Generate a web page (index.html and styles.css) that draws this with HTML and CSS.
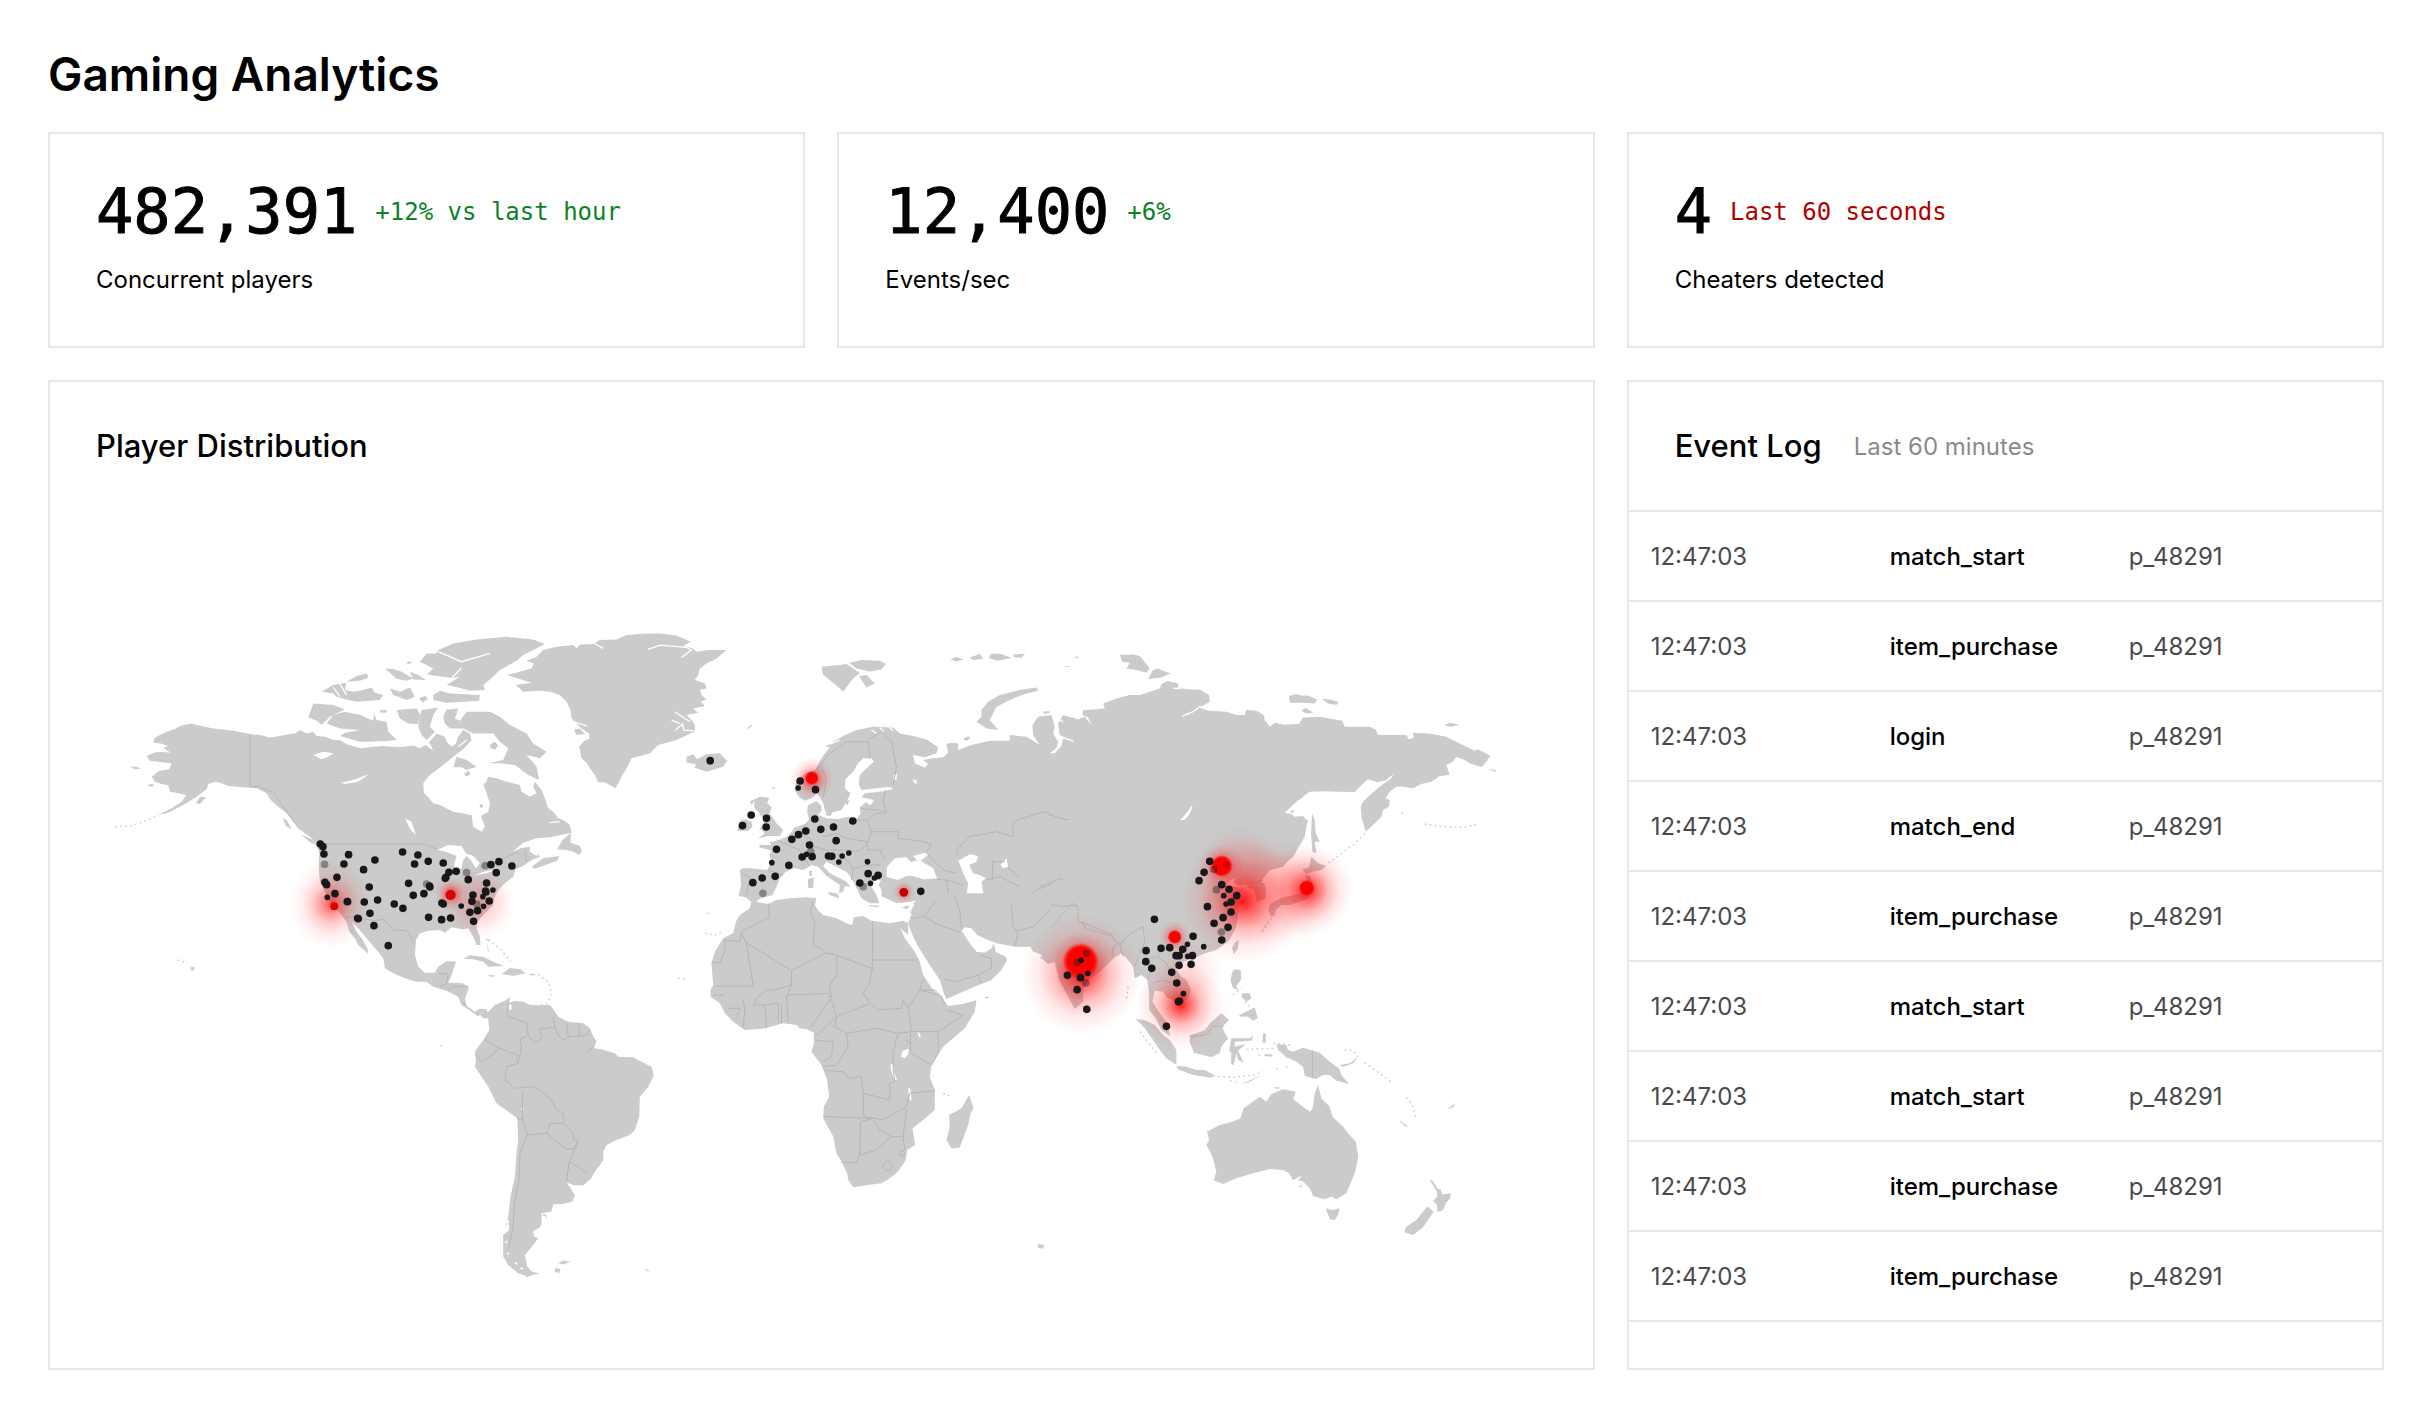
FILE: index.html
```html
<!DOCTYPE html>
<html lang="en">
<head>
<meta charset="utf-8">
<meta name="viewport" content="width=device-width, initial-scale=1">
<title>Gaming Analytics</title>
<link rel="stylesheet" href="styles.css">
</head>
<body>
<main class="page">
  <h1 class="page-title">Gaming Analytics</h1>
  <div class="dashboard">
    <section class="card stat">
      <div class="stat-row"><span class="stat-value">482,391</span><span class="stat-note up">+12% vs last hour</span></div>
      <p class="stat-label">Concurrent players</p>
    </section>
    <section class="card stat">
      <div class="stat-row"><span class="stat-value">12,400</span><span class="stat-note up">+6%</span></div>
      <p class="stat-label">Events/sec</p>
    </section>
    <section class="card stat">
      <div class="stat-row"><span class="stat-value">4</span><span class="stat-note alert">Last 60 seconds</span></div>
      <p class="stat-label">Cheaters detected</p>
    </section>

    <section class="card distribution">
      <header class="card-header"><h2 class="card-title">Player Distribution</h2></header>
      <svg class="map" viewBox="50 510 1543 858" role="img" aria-label="World map of players">
        <defs>
          <radialGradient id="glow"><stop offset="0" stop-color="#f00" stop-opacity=".9"/><stop offset=".2" stop-color="#f00" stop-opacity=".58"/><stop offset=".45" stop-color="#f00" stop-opacity=".26"/><stop offset=".7" stop-color="#f00" stop-opacity=".09"/><stop offset="1" stop-color="#f00" stop-opacity="0"/></radialGradient>
          <radialGradient id="haze"><stop offset="0" stop-color="#f00" stop-opacity=".24"/><stop offset=".5" stop-color="#f00" stop-opacity=".12"/><stop offset=".8" stop-color="#f00" stop-opacity=".03"/><stop offset="1" stop-color="#f00" stop-opacity="0"/></radialGradient>
          <radialGradient id="core"><stop offset=".75" stop-color="#f00"/><stop offset="1" stop-color="#f00" stop-opacity="0"/></radialGradient>
        </defs>

        <!-- North America -->
        <g transform="translate(100 600) scale(.33333)">
          <path class="land" d="M275 370L258 374 240 378 222 388 200 395 165 412 160 428 182 430 205 438 190 444 212 458 190 456 165 457 140 468 150 482 180 486 215 490 208 508 178 512 155 530 165 545 185 552 205 556 210 575 235 580 258 585 245 605 215 625 175 645 205 638 250 615 290 590 320 568 325 552 345 545 365 550 385 558 430 562 470 565 500 580 512 600 535 620 560 640 580 665 605 692 635 715 650 735 658 760 656 800 660 845 675 875 690 905 720 940 740 965 748 995 765 1015 775 1035 805 1062 803 1045 785 1015 770 995 755 965 775 985 800 1015 830 1050 850 1075 855 1105 880 1120 915 1135 950 1145 980 1145 1000 1160 1040 1172 1075 1190 1085 1215 1115 1235 1135 1250 1145 1238 1165 1245 1160 1228 1140 1226 1125 1235 1100 1218 1095 1195 1107 1165 1090 1150 1045 1148 1055 1125 1068 1085 1040 1083 1015 1100 1005 1118 975 1118 955 1100 945 1065 948 1020 960 1000 985 992 1020 990 1035 998 1055 982 1090 988 1105 985 1120 1010 1130 1035 1142 1035 1140 1010 1130 985 1132 965 1155 940 1180 915 1183 895 1195 870 1215 850 1240 830 1247 808 1270 798 1295 780 1320 770 1300 745 1350 712 1415 698 1410 675 1390 660 1375 655 1360 635 1345 625 1335 595 1325 570 1305 545 1300 560 1310 580 1290 590 1265 575 1260 555 1220 545 1190 535 1165 530 1158 548 1150 552 1160 580 1170 610 1165 635 1143 648 1155 680 1145 695 1120 680 1115 645 1060 635 1020 615 1000 610 985 592 972 580 970 550 990 525 1030 495 1060 470 1090 448 1115 420 1110 400 1090 390 1075 410 1068 430 1055 440 1040 425 1035 410 1010 400 985 430 960 445 940 436 900 442 845 438 780 445 740 432 720 420 700 420 675 410 650 408 640 395 620 400 600 390 585 400 570 402 540 408 510 412 480 405 450 402 400 392 340 385 290 375Z"/>
          <path class="land" d="M640 310L700 315 735 328 710 340 690 350 665 375 650 362 625 352ZM735 335L780 345 820 362 822 340 830 360 860 365 865 395 890 420 840 425 780 425 720 408 735 398 780 390 720 385 680 370 700 345ZM960 185L980 160 1010 160 1015 150 1060 130 1130 118 1220 110 1300 118 1335 132 1300 150 1270 165 1250 182 1200 210 1180 230 1150 255 1155 270 1110 272 1075 262 1040 255 1080 230 1050 235 980 225 1000 205ZM1000 285L1020 272 1050 280 1140 285 1138 302 1090 305 1040 308 1000 300ZM665 275L700 255 740 248 735 270 760 275 790 270 815 262 825 278 850 285 840 300 770 305 740 298 710 290 700 280ZM870 265L900 275 930 262 945 290 920 300 895 290 880 285ZM740 245L770 228 800 220 806 232 780 242ZM855 205L880 207 905 215 940 235 920 242 890 236 870 218ZM930 215L955 225 978 240 940 238ZM1030 350L1040 328 1075 325 1065 355 1080 362 1100 335 1170 335 1200 350 1230 375 1280 400 1300 430 1340 455 1320 475 1280 465 1310 500 1318 540 1285 525 1245 495 1200 490 1165 490 1210 480 1225 445 1200 425 1180 400 1120 400 1090 385 1050 385 1035 370ZM890 330L950 325 962 345 955 372 925 370 900 355ZM965 330L1015 322 1000 345 990 380 1005 395 980 420 965 405 955 380ZM1060 502L1070 470 1100 480 1130 500 1100 510 1085 502ZM1092 522L1105 512 1112 522 1100 530ZM1138 618l5-7 8 6-6 8ZM1170 435l15-10 10 12-10 12-12-4ZM1295 800L1330 775 1378 768 1372 782 1345 792 1305 806ZM1372 748L1388 720 1413 698 1412 728 1440 738 1446 752 1438 765 1420 755 1400 750ZM603 703L635 718 652 737 630 727ZM548 655L560 660 575 688 558 678ZM288 610L300 590 318 592 300 612ZM90 500l20 0 12 6-18 2ZM142 555l14-4 8 6-14 3ZM272 1100l12 2-2 10-10-2ZM1090 1077L1110 1066 1150 1070 1180 1085 1212 1098 1165 1100 1150 1085 1120 1078ZM1205 1122L1230 1104 1262 1108 1276 1120 1240 1128ZM1165 1124l20 2-5 5-12-2ZM1290 1121l16 0-2 5-14 0ZM1160 1030l8 25-4-2ZM1155 1015l15 4-6 3ZM918 188l12-4 8 4-14 4ZM958 295l18-8 8 10-16 10ZM840 330l22 0-4 8-16 0Z"/>
          <path class="water" d="M1012 750L1045 735 1085 738 1098 760 1120 768 1140 790 1128 805 1112 780 1100 768 1090 780 1085 805 1070 812 1062 795 1070 768 1040 756ZM1122 828L1150 815 1190 808 1160 820ZM1238 755L1270 728 1310 715 1350 712 1330 735 1310 768 1290 755 1290 740 1262 745ZM640 465L670 455 700 460 685 470 665 478ZM722 548L760 540 808 522 775 545 735 552ZM915 655L935 665 948 705 932 690ZM1000 452L965 425 990 430Z"/>
          <path class="line" d="M655 732H972L1012 748M1140 800L1200 782 1245 758 1258 760M1275 748L1280 785M450 402V560L478 560 520 578 600 690M735 952L760 950 820 962 850 958 880 990 920 992 945 1030M1015 1120L1045 1122 1040 1150 1020 1160M1042 1170L1060 1160 1105 1160M1088 1210L1100 1214"/>
          <path class="inlet" d="M1015 155L1085 185 1170 160M1050 240L1085 203M980 225L1050 235M650 280L700 290M745 432L850 425M1100 420L1075 440M1380 665L1350 668M700 262L720 290M720 252L740 285"/>
          <path class="isles" d="M45 680L90 678 130 665 175 645M232 1080L262 1090M1165 1020L1200 1045 1232 1085M1315 1123L1345 1145 1355 1180 1340 1212 1320 1215M515 575L575 640"/>
        </g>

        <!-- Greenland and Iceland -->
        <g transform="translate(460 600) scale(.33333)">
          <path class="land" d="M140 225L180 215 215 205 222 190 200 182 230 170 250 150 290 140 340 135 350 145 360 133 400 132 420 120 470 118 500 105 560 100 600 100 650 106 692 125 670 138 700 145 710 155 745 150 800 150 770 175 740 190 720 205 715 225 705 240 735 250 740 265 720 270 725 285 740 298 722 305 735 318 700 325 715 338 680 345 700 365 705 375 703 395 650 420 595 435 570 460 515 475 500 505 485 530 467 565 437 548 415 546 405 525 390 505 380 488 365 475 358 440 370 425 388 415 388 400 365 385 335 355 332 330 320 305 300 285 270 275 240 272 190 275 168 255 215 248ZM342 388L360 385 375 402 350 405ZM680 470L700 463 712 478 740 463 780 460 802 482 790 500 740 515 705 503 708 492 680 488ZM860 385l14-10 4 2-12 8Z"/>
          <path class="inlet" d="M565 148L600 135 680 142 695 150 665 172M400 128L430 145M645 335L690 365M645 392L668 372 672 390 700 392M635 360L660 370M340 365L382 378"/>
        </g>

        <!-- Europe and western Asia -->
        <g transform="translate(680 620) scale(.33333)">
          <path class="land" d="M176 828L184 795 180 750 190 744 215 745 262 750 275 725 268 705 275 692 238 682 240 674 275 676 270 665 290 664 310 655 325 648 345 622 375 612 388 598 382 575 385 555 410 543 425 558 425 572 415 585 440 595 475 597 505 590 532 595 542 580 540 562 560 545 575 552 582 540 545 532 555 520 600 515 640 508 630 500 590 505 545 510 537 495 540 465 555 450 582 425 575 415 550 415 535 430 520 455 497 478 495 505 512 520 500 545 485 570 455 578 437 575 430 550 420 530 412 520 395 535 375 542 358 532 345 510 350 480 375 462 405 450 425 415 450 380 435 382 465 362 490 348 530 330 580 320 640 322 660 340 700 348 740 358 775 382 770 400 735 412 700 405 705 430 735 443 745 432 730 420 760 415 790 412 805 398 800 370 830 368 835 390 875 375 930 362 990 362 990 345 1040 350 1080 375 1060 345 1058 315 1075 290 1115 285 1125 320 1120 340 1135 365 1130 385 1110 400 1125 400 1145 378 1150 355 1180 365 1140 345 1135 310 1150 285 1200 300V880H690L705 850 715 840 690 845 650 850 625 838 605 828 605 810 597 795 603 780 585 780 565 785 575 800 590 825 598 850 570 850 545 835 530 805 518 780 500 755 465 738 440 725 430 738 450 760 500 785 512 800 495 798 490 815 478 820 480 795 440 768 415 740 395 735 370 750 345 745 318 755 300 775 290 800 278 825 240 836 220 852 198 832ZM445 815L475 822 478 835 450 825ZM384 778L402 772 400 805 385 803ZM388 752l8 0 0 16-6 0ZM225 538L240 530 268 533 262 550 275 560 270 580 290 610 310 630 300 648 265 648 235 655 255 640 238 625 252 612 248 595 235 575 222 562ZM172 632L178 605 195 598 215 605 218 620 205 632ZM440 572l18 5-6 12-14-4ZM500 540l10 2-8 14-4-4ZM566 855l34 2-4 5-28-3ZM665 862l26-6-10 12ZM425 140L480 135 500 132 540 158 520 175 490 215 465 192 430 165ZM508 128L545 120 600 122 618 132 605 148 570 154 530 145ZM538 168L560 165 585 190 560 202ZM890 305L905 290 905 270 925 245 960 225 1020 210 1070 202 1075 212 1040 220 1000 235 950 260 930 300 955 330 920 325ZM852 355l12-6 8 4-10 8-10-2ZM812 118l18-8 20 8-20 6ZM870 112l30-10 10 14-30 4ZM935 100l30 2 30 12-40 8-28-8ZM1000 104l36-4-10 12-22 0ZM1090 275l18-2 2 6-18 2ZM210 545l18-10-12 20ZM275 510l8-12 2 6ZM805 370l30 0 0 15-30 10Z"/>
          <path class="water" d="M620 770L622 740 645 715 680 712 693 725 712 722 700 708 735 698 745 705 722 722 760 745 772 775 730 778 700 768 680 768 655 780ZM836 722L870 703 895 708 890 725 868 735 880 760 900 765 918 775 905 785 912 830 880 835 860 825 865 790 850 760ZM640 465L652 462 650 480 642 478ZM697 478L712 482 708 495ZM962 735L980 715 985 740 970 745ZM568 540L578 545 572 555 560 550Z"/>
          <path class="line" d="M410 450L450 400 500 365 565 365 570 415M565 360L605 335 635 365 650 440 640 495M430 535L440 480 425 440M542 565L590 570 620 575 610 545 618 510M560 600L590 580 620 580M520 600L560 600 575 635 565 665M575 635L655 635 655 655 735 665 755 675 740 695M430 650L470 640 500 655 565 665 545 690 520 695M380 610L360 640 390 655 400 680 440 690 520 690M290 660L360 690 370 710 390 740M470 700L500 720 520 745 560 735 600 735M600 690L615 720M185 760L210 770 200 825M265 750L310 765M520 745L515 780M745 705L790 750 830 760M770 778L800 780 805 825 770 835 700 850M800 780L850 795M830 690L870 650 950 635 1000 650 1000 605 1090 575 1140 595 1170 600 1200 625M830 690L835 710M938 780V725L975 725M985 745L1020 770 1080 790 1100 760 1150 770 1200 770M920 780L960 770 1020 800 1065 825M805 825L830 880M1000 860L1065 825 1100 835 1140 830 1160 850 1200 840M560 665L565 690 610 690"/>
          <path class="inlet" d="M575 330L590 340M600 322L612 335M628 322L640 332M450 372L480 360M1130 295L1150 305M1140 350L1180 362 1185 380"/>
        </g>

        <!-- Siberia and central Asia -->
        <g transform="translate(960 620) scale(.33333)">
          <path class="land" d="M340 290L350 300 375 290 395 315 385 292 368 285 370 270 400 268 435 265 430 250 470 235 510 225 540 225 570 215 600 205 605 192 625 183 655 190 655 203 690 208 720 208 748 225 750 245 720 262 745 272 800 275 830 285 858 285 860 270 900 278 912 300 930 320 945 308 970 315V740L925 745 905 765 905 785 918 800 918 830 890 840 885 805 870 790 840 795 822 785 835 770 805 785 800 800 825 800 850 810 830 825 840 850 832 880 815 905H340ZM480 105L520 103 540 108 550 120 570 145 560 158 530 150 500 145 510 128 488 125ZM565 177L580 150 595 145 610 152 633 160 605 172ZM315 138h14v2h-14ZM345 110h12v3h-12Z"/>
          <path class="water" d="M636 618Q665 600 680 580T698 553Q698 570 685 588T636 618Z"/>
          <path class="inlet" d="M668 288L700 275 720 260 755 268M640 205L665 205"/>
          <path class="line" d="M360 630L400 640 440 660 395 690 385 710 375 740 330 735M440 660L500 635 550 640 560 620 610 625 640 640 710 650 790 640 800 610 850 600 880 620 910 660 960 670M440 660L480 685 485 705 560 740 640 755 710 740 730 710 800 685 755 660 760 645M260 770L300 760M230 800L300 800 310 825 360 850 355 900M290 715L335 700"/>
        </g>

        <!-- Russian far east, Korea and Japan -->
        <g transform="translate(1240 620) scale(.33333)">
          <path class="land" d="M-10 290L15 285 20 270 50 272 72 285 75 300 90 320 100 318 105 308 130 314 178 312 190 292 240 290 308 302 315 320 390 320 408 328 415 345 500 345 508 358 522 352 520 338 570 340 620 350 660 370 705 392 715 388 752 407 740 425 725 442 690 430 670 418 650 410 640 425 620 435 630 465 600 468 575 485 545 492 520 505 490 500 470 500 450 515 438 535 450 540 448 560 430 570 425 590 410 605 378 635 365 590 363 560 370 545 385 530 420 500 455 475 460 463 440 480 415 487 385 478 360 500 345 516 300 515 260 514 210 515 170 545 135 578 155 582 165 590 190 588 203 605 195 650 160 710 125 740 98 742 62 785 78 810 75 838 52 845 45 810 22 800 18 775-10 770ZM217 580L225 600 228 640 240 665 225 665 230 700 218 695 214 640ZM188 748L208 742 215 710 235 730 260 738 245 750 220 755 200 762ZM195 765L212 768 220 800 205 835 180 845 150 855 125 855 108 870 105 885 95 890 85 870 90 852 130 832 165 825 190 815 205 790ZM148 228L170 222 185 226 205 226 232 238 225 250 185 248 150 248ZM246 236L270 238 297 246 290 255 265 250ZM185 272L198 264 222 278 200 280ZM613 316L630 308 660 314 635 320ZM745 448L770 450 765 455ZM150 572l14-2-6 10Z"/>
          <path class="line" d="M0 605L20 605 50 655 90 675 125 668 120 705 98 710 95 740M40 800L75 790"/>
          <path class="isles" d="M375 640L340 675 265 730M485 578L495 582M555 612L610 620 670 622 712 613M95 895L60 945"/>
        </g>

        <!-- India, China, south-east Asia and Oceania -->
        <g transform="translate(1020 820) scale(.33333)">
          <path class="land" d="M0 0H865L850 50 820 100 790 140 750 150 722 172 722 185 738 210 735 238 712 245 705 215 690 192 652 195 640 185 652 170 625 185 612 200 650 200 665 215 640 225 650 248 655 290 648 325 625 365 590 390 550 402 530 412 505 420 480 430 470 448 485 470 500 480 514 510 505 535 478 558 465 545 440 530 430 515 405 512 398 545 420 580 440 605 452 648 425 630 408 595 388 570 388 520 383 480 365 465 345 475 340 440 318 412 305 400 285 412 265 432 235 460 205 480 192 505 190 545 165 567 145 530 118 480 105 425 85 432 60 412 75 405 40 395 30 378 0 380ZM190 558l14-2 8 14-10 10-12-6ZM637 385L645 368 657 360 655 385 643 402ZM348 597L375 600 405 615 430 645 450 660 470 690 470 735 440 715 420 690 400 660 375 625ZM470 738L500 740 530 750 555 750 582 765 575 773 520 765 475 748ZM510 645L530 640 555 630 575 605 605 580 628 600 608 620 615 640 625 655 605 680 600 700 575 712 550 705 522 698 510 665ZM635 655L690 655 702 645 695 662 645 665 645 680 678 672 655 692 672 728 655 720 650 700 642 735 634 733 635 700 628 690ZM638 455L645 448 663 450 665 478 650 498 655 510 640 505 632 480ZM658 585L680 575 705 562 714 595 700 602 685 590 662 590ZM668 520L690 520 695 535 680 545 665 530ZM770 672L800 675 805 690 820 695 850 683 900 698 930 725 958 745 965 765 988 792 950 782 930 765 910 765 890 777 855 768 850 740 825 722 800 712 775 690ZM958 735L990 730 1015 710 1000 730 970 740ZM730 640l8 0 0 28-10 0ZM735 702l25 2-5 6-20-2ZM665 793L725 765 690 785ZM608 588L640 535 612 580ZM562 935L600 915 640 905 662 895 672 865 720 830 740 845 755 822 790 808 828 815 820 838 850 860 872 875 880 860 885 820 895 795 905 835 930 860 938 890 970 920 985 940 1008 965 1016 1010 1005 1060 980 1120 950 1138 935 1130 915 1138 880 1128 870 1105 850 1085 835 1080 850 1065 820 1080 808 1060 790 1050 750 1047 700 1060 650 1075 610 1092 582 1082 590 1055 578 1010 560 975 568 960ZM918 1165L938 1170 960 1165 955 1185 945 1200 930 1198ZM757 803l22-2-2 6ZM835 1100l14-4-4 6ZM1282 868L1310 848 1300 862ZM1135 897L1168 922 1155 918Z"/>
          <path class="line" d="M40 380L75 350 95 320 130 280 160 250 175 260 175 300 200 325 280 350 290 370 275 400M175 260L155 255 130 260 75 250 60 290 0 330M0 240L50 210 100 190M200 325L185 305 240 330 280 345M310 410L300 375 320 350 350 330 370 320 375 370 360 395 385 415M385 415L395 440 385 480M385 415L415 410 425 385 460 390M415 410L440 430 455 460 480 480M400 490L430 480 460 490M280 410V380L315 360M512 650L560 645 580 620 612 618M878 692V775M60 200L110 180 130 175M690 190L730 180M360 395L345 440"/>
          <path class="isles" d="M580 768L640 772 700 766 730 755M360 635L385 665 410 700M680 688L770 685M1035 728L1065 750 1118 788M1160 832L1180 860 1188 890M640 525L665 505M675 545L695 565M325 500L320 540M760 670L820 675M975 690L1000 692 1015 710M772 750L775 735M800 745L805 735M715 705L725 708M630 782L650 786M728 332L745 305"/>
        </g>
        <g transform="translate(1380 1120) scale(.33333)">
          <path class="land" d="M150 180L158 182 175 208 182 208 188 224 213 220 212 235 198 250 190 270 173 277 172 255 160 243 172 230 172 215ZM143 260L162 275 145 300 130 322 100 345 75 338 78 322 110 300Z"/>
        </g>

        <!-- Africa and Arabia -->
        <g transform="translate(690 880) scale(.33333)">
          <path class="land" d="M185 62L235 72 260 60 300 55 350 52 380 55 375 75 384 90 400 105 440 115 470 130 487 135 492 112 520 108 545 122 600 130 640 122 655 130 655 165 632 145 645 175 675 215 690 245 700 285 730 330 755 350 775 378 820 372 860 360 855 395 825 445 760 500 725 555 720 590 735 630 735 690 700 720 668 745 676 795 652 810 648 840 625 875 600 895 575 910 535 915 490 922 475 900 472 880 455 845 440 820 430 770 400 715 402 680 418 650 412 600 395 555 365 515 372 490 372 458 350 448 330 445 320 435 280 430 225 445 165 450 130 425 105 400 90 370 62 350 62 330 70 315 65 250 75 215 100 175 130 160 138 125 150 105 180 85ZM655 130L675 75 680 40H1085V248L1068 245 1055 225 1045 220 1030 200 975 200 920 190 890 178 862 165 845 145 825 142 816 152 840 190 860 215 885 218 905 205 912 190 918 215 948 230 952 240 935 270 905 300 850 322 770 357 762 340 750 300 710 240 695 215 685 200 668 165ZM838 645L851 685 843 700 835 735 810 803 785 806 770 780 780 740 778 705 815 685ZM885 350l14 0-4 5-10-1Z"/>
          <path class="water" d="M638 512L658 506 655 522 645 535 634 530ZM603 550L610 555 612 575 622 600 614 598 603 570ZM655 622L662 628 666 662 658 658ZM683 455L690 460 693 475 688 472Z"/>
          <path class="line" d="M237 70L238 112 155 155 150 185 105 180 105 215 90 248 65 248M155 160L170 190 190 318H118L78 318M165 185L305 272 410 218 440 225M370 65L362 95 375 130 370 190 410 220M410 218L440 225 545 265M548 125V265L540 305 520 340M550 240H685M305 272V315L255 330 230 330 200 355 190 380M305 315L290 350 300 345 420 340M440 225L442 280 418 320 425 350 385 410 360 445M420 345L440 410 375 470M520 340L540 370 440 410 435 440 470 460 560 445 625 460 665 455M540 370L565 390 635 385 640 360 655 385 690 330 745 345M655 385L665 455 745 455 820 405 770 390M765 370L755 350 735 330 690 330 700 295M745 455V520L725 555 665 520M470 460L475 500 440 555 400 560M375 480L430 485 425 530 400 545M405 572L460 575 475 595 515 590 520 640 600 660 600 610 615 605 610 570 610 515 625 460M520 640L522 710 580 720 650 680 660 640 735 632M402 710L550 715 512 725 510 825 500 848H455M510 825L560 810 605 770 640 770 650 690M550 720L570 750 605 770M640 770L645 810M580 858a12 12 0 1 0 28 0a12 12 0 1 0-28 0M628 820a8 8 0 1 0 16 0a8 8 0 1 0-16 0M195 375L225 375 230 445M225 375L265 370 265 430M275 370L275 430M290 350L295 425M160 360L165 390 160 445M115 385L150 385 140 415M70 345L105 345M662 515V460M668 115L700 110 740 65M700 110L760 140 810 155M765 298L800 305 865 285 905 265V235L870 225M865 285L875 310M795 50L810 90 815 145M965 75L970 140 985 160 975 200M975 155L1030 140 1080 90M645 480L665 490"/>
          <path class="isles" d="M45 160L75 165 98 155M760 640L785 650M50 100L62 101"/>
        </g>

        <!-- South America -->
        <g transform="translate(440 940) scale(.33333)">
          <path class="land" d="M118 222L145 215 165 195 195 182 212 170 208 188 225 182 250 185 270 195 300 196 330 195 340 208 355 230 385 245 430 250 450 265 458 285 470 305 460 325 485 328 525 340 535 350 580 352 605 365 635 380 642 405 625 440 600 470 598 530 585 570 570 585 530 600 500 615 490 635 490 660 460 710 430 737 400 735 380 728 392 745 405 765 398 785 370 792 340 793 335 815 305 820 305 850 300 862 280 875 282 890 295 895 280 915 255 945 262 980 275 995 298 1000 265 1010 235 1000 205 975 190 950 190 885 208 870 205 830 212 770 225 710 230 640 235 600 232 535 170 490 145 440 105 380 108 365 105 335 130 300 148 270 145 235 130 235ZM355 970L370 962 392 966 370 974ZM610 986l20 6-6 3ZM310 820l12 8-8 10 4-10-8 0Z"/>
          <path class="water" d="M206 195l8-2 2 14-8 4ZM455 712L475 680 478 685 462 715ZM245 505l6-2 0 8-6 0ZM200 940l8-4-2 10ZM222 970l8-4 2 10ZM195 905l8-4-2 10ZM240 985l8-4 2 10Z"/>
          <path class="line" d="M205 190L202 230 260 248 265 290 285 308 308 295 298 268 345 262 340 232M345 262L358 290 370 300 385 290 380 250M385 290L418 290 418 250M418 290L440 285 450 268M135 300L180 325 230 345 235 370 245 320 240 298 260 290M110 345L125 368 180 325M235 370L200 380 195 420 225 445 285 440 340 485 345 505 370 520 372 550 330 550 322 580 290 582 262 585 248 540 248 455M372 550L400 580 402 600 415 600 408 625 380 628 358 612 322 580M415 600L388 665 380 725M388 665L445 700M262 585L240 640 238 720 225 780 218 870 205 930M232 535L248 540M440 338L465 318"/>
          <path class="isles" d="M0 316L14 318M715 115L745 118M192 890L195 960 265 1012M205 835L200 855"/>
        </g>
        <path class="isles" d="M1038 1246L1045 1247M555 1270L560 1271"/>

        <!-- Activity halos -->
        <g>
          <ellipse cx="331" cy="904" rx="40" ry="44" fill="url(#glow)" opacity=".75"/>
          <circle cx="480" cy="903" r="36" fill="url(#haze)"/>
          <circle cx="451" cy="894" r="17" fill="url(#glow)"/>
          <circle cx="812" cy="779" r="22" fill="url(#glow)"/>
          <circle cx="904" cy="892" r="11" fill="url(#glow)"/>
          <circle cx="1082" cy="974" r="60" fill="url(#glow)"/>
          <circle cx="1081" cy="961" r="28" fill="url(#glow)"/>
          <circle cx="1222" cy="866" r="22" fill="url(#glow)"/>
          <circle cx="1240" cy="872" r="50" fill="url(#haze)" opacity=".8"/>
          <circle cx="1243" cy="901" r="62" fill="url(#glow)"/>
          <circle cx="1280" cy="893" r="56" fill="url(#haze)"/>
          <circle cx="1308" cy="890" r="45" fill="url(#glow)"/>
          <circle cx="1175" cy="937" r="17" fill="url(#glow)"/>
          <circle cx="1181" cy="1005" r="44" fill="url(#glow)"/>
          <circle cx="1190" cy="970" r="36" fill="url(#haze)" opacity=".5"/>
          <circle cx="1081" cy="961" r="18" fill="url(#core)"/>
          <circle cx="1222" cy="866" r="11" fill="url(#core)"/>
          <circle cx="1175" cy="937" r="7" fill="url(#core)"/>
          <circle cx="1307" cy="888" r="8" fill="url(#core)"/>
          <circle cx="812" cy="778" r="7" fill="url(#core)"/>
        </g>

        <!-- Player clusters -->
        <g transform="translate(100 600) scale(.33333)">
          <path class="dots" d="M661 732h0M669 740h0M672 762h0M746 764h0M732 792h0M825 780h0M791 809h0M711 832h0M675 847h0M680 854h0M705 881h0M808 861h0M743 905h0M742 905h0M793 906h0M833 900h0M810 940h0M773 955h0M775 956h0M822 977h0M865 1037h0M908 756h0M954 765h0M944 792h0M985 784h0M1030 789h0M1047 817h0M1069 814h0M1038 832h0M1036 835h0M1105 839h0M926 850h0M989 858h0M990 861h0M940 886h0M972 881h0M883 912h0M909 925h0M1026 909h0M1030 912h0M986 952h0M1025 959h0M1052 954h0M1121 964h0M1110 937h0M1133 932h0M1168 903h0M1157 873h0M1160 849h0M1119 885h0M1116 904h0M1189 818h0M1197 785h0M1236 798h0M1173 794h0M1158 876h0"/>
          <path class="dots small" d="M682 892h0M1084 918h0M1151 919h0M1179 870h0M1149 890h0"/>
          <path class="dots faded" d="M674 793h0M1100 818h0M1156 797h0M980 852h0M1131 913h0"/>
          <circle cx="703" cy="919" r="12" fill="#d90000"/><circle cx="1052" cy="885" r="15" fill="#d90000"/>
        </g>
        <g transform="translate(680 620) scale(.33333)">
          <path class="dots" d="M91 422h0M361 483h0M407 509h0M214 585h0M260 595h0M259 621h0M188 617h0M405 597h0M519 603h0M461 621h0M423 628h0M378 633h0M356 644h0M336 658h0M469 662h0M389 675h0M290 688h0M327 736h0M367 711h0M397 710h0M446 708h0M456 709h0M219 788h0M247 774h0M286 769h0M565 761h0M595 766h0M540 789h0M723 814h0"/>
          <path class="dots small" d="M355 504h0M276 728h0M487 708h0M507 699h0M477 726h0M563 725h0M572 790h0M380 703h0M584 774h0"/>
          <path class="dots faded" d="M249 820h0M393 695h0M550 800h0"/>
          <circle cx="672" cy="817" r="13" fill="#c40000"/><circle cx="396" cy="472" r="9" fill="#e40000"/>
        </g>
        <g transform="translate(1020 820) scale(.33333)">
          <path class="dots" d="M570 124h0M553 157h0M538 182h0M606 194h0M628 208h0M651 227h0M634 246h0M563 260h0M634 276h0M610 293h0M583 310h0M625 322h0M606 360h0M404 298h0M379 392h0M378 425h0M396 445h0M424 385h0M450 383h0M489 388h0M520 349h0M469 407h0M478 407h0M518 407h0M478 436h0M514 433h0M456 457h0M471 489h0M476 545h0M479 543h0M440 619h0M143 466h0M182 473h0M172 509h0M201 568h0"/>
          <path class="dots small" d="M612 227h0M619 252h0M552 380h0M504 409h0M503 373h0M491 521h0M204 460h0M184 421h0"/>
          <path class="dots faded" d="M590 209h0M605 336h0M200 400h0M172 428h0M582 148h0M198 489h0"/>
          <circle cx="619" cy="134" r="10" fill="#d90000"/>
        </g>
      </svg>
    </section>

    <section class="card log">
      <header class="card-header ruled"><h2 class="card-title">Event Log</h2><span class="card-note">Last 60 minutes</span></header>
      <table class="events" aria-label="Event Log">
        <tbody>
          <tr><td>12:47:03</td><td class="event">match_start</td><td>p_48291</td></tr>
          <tr><td>12:47:03</td><td class="event">item_purchase</td><td>p_48291</td></tr>
          <tr><td>12:47:03</td><td class="event">login</td><td>p_48291</td></tr>
          <tr><td>12:47:03</td><td class="event">match_end</td><td>p_48291</td></tr>
          <tr><td>12:47:03</td><td class="event">item_purchase</td><td>p_48291</td></tr>
          <tr><td>12:47:03</td><td class="event">match_start</td><td>p_48291</td></tr>
          <tr><td>12:47:03</td><td class="event">match_start</td><td>p_48291</td></tr>
          <tr><td>12:47:03</td><td class="event">item_purchase</td><td>p_48291</td></tr>
          <tr><td>12:47:03</td><td class="event">item_purchase</td><td>p_48291</td></tr>
        </tbody>
      </table>
    </section>
  </div>
</main>
</body>
</html>
```
FILE: styles.css
```css
* {
  box-sizing: border-box;
}

body {
  margin: 0;
  background: #fff;
  color: #000;
  font-family: Inter, "Liberation Sans", sans-serif;
  font-size: 24px;
}

h1,
h2,
p {
  margin: 0;
}

.page {
  display: flex;
  flex-direction: column;
  gap: 32px;
  min-height: 100vh;
  padding: 48px;
}

.page-title {
  font-size: 46px;
  font-weight: 600;
  line-height: 52px;
}

.dashboard {
  flex: 1;
  display: grid;
  grid-template-columns: repeat(3, minmax(0, 1fr));
  grid-template-rows: auto 1fr;
  gap: 32px;
}

.card {
  border: 2px solid #e7e7e7;
  background: #fff;
}

.stat {
  display: flex;
  flex-direction: column;
  gap: 16px;
  padding: 46px;
}

.stat-row {
  display: flex;
  align-items: center;
  gap: 18px;
  font-family: "DejaVu Sans Mono", monospace;
}

.stat-value {
  font-size: 62px;
  line-height: 64px;
  -webkit-text-stroke: 1px currentColor;
}

.stat-note {
  font-size: 24px;
  line-height: 32px;
}

.up {
  color: #0a8226;
}

.alert {
  color: #b00000;
}

.stat-label {
  line-height: 40px;
}

.distribution {
  grid-column: span 2;
  display: flex;
  flex-direction: column;
}

.card-header {
  display: flex;
  align-items: center;
  gap: 32px;
  padding: 44px 46px;
}

.ruled {
  border-bottom: 2px solid #e7e7e7;
}

.card-title {
  font-size: 31px;
  font-weight: 500;
  line-height: 40px;
}

.card-note {
  color: #8a8a8a;
}

.map {
  flex: 1;
  width: 100%;
  min-height: 0;
}

.land {
  fill: #cbcbcb;
}

.water {
  fill: #fff;
}

.line {
  fill: none;
  stroke: #b6b6b6;
  stroke-width: 3;
  stroke-linejoin: round;
}

.inlet {
  fill: none;
  stroke: #fff;
  stroke-width: 4;
}

.isles {
  fill: none;
  stroke: #cfcfcf;
  stroke-width: 4;
  stroke-dasharray: 6 9;
}

.dots {
  fill: none;
  stroke: #18181a;
  stroke-width: 23;
  stroke-linecap: round;
}

.small {
  stroke-width: 17;
}

.faded {
  opacity: 0.4;
}

.events {
  width: 100%;
  table-layout: fixed;
  border-collapse: separate;
  border-spacing: 0;
}

.events td {
  height: 90px;
  padding: 0;
  border-bottom: 2px solid #e7e7e7;
  color: #4a4a4a;
}

.events td:first-child {
  width: 261px;
  padding-left: 22px;
}

.events .event {
  width: 239px;
  color: #000;
  font-weight: 500;
}
```
